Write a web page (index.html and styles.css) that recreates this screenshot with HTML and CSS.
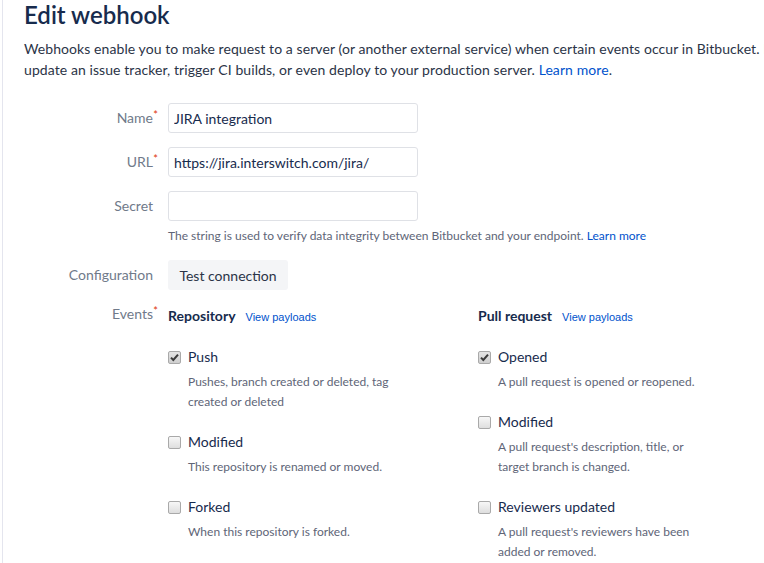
FILE: index.html
```html
<!DOCTYPE html>
<html lang="en">
<head>
<meta charset="utf-8">
<title>Edit webhook</title>
<link rel="stylesheet" href="styles.css">
</head>
<body>
<div class="page">
  <h1 class="title">Edit webhook</h1>
  <p class="intro">Webhooks enable you to make request to a server (or another external service) when certain events occur in Bitbucket. For example, you can use webhooks to<br>update an issue tracker, trigger CI builds, or even deploy to your production server. <a class="link" href="#">Learn more</a>.</p>

  <form class="form">
    <div class="row">
      <label class="lbl"><span class="req">Name</span></label>
      <div class="field"><input class="text" type="text" value="JIRA integration"></div>
    </div>
    <div class="row">
      <label class="lbl"><span class="req">URL</span></label>
      <div class="field"><input class="text" type="text" value="https://jira.interswitch.com/jira/"></div>
    </div>
    <div class="row">
      <label class="lbl">Secret</label>
      <div class="field">
        <input class="text" type="text" value="">
        <div class="help">The string is used to verify data integrity between Bitbucket and your endpoint. <a class="link" href="#">Learn more</a></div>
      </div>
    </div>
    <div class="row">
      <label class="lbl">Configuration</label>
      <div class="field"><button class="btn" type="button">Test connection</button></div>
    </div>
    <div class="row row-events">
      <label class="lbl lbl-events"><span class="req">Events</span></label>
      <div class="events">
        <div class="group">
          <div class="group-head"><span class="group-title">Repository</span><a class="payloads" href="#">View payloads</a></div>
          <div class="event">
            <div class="event-head"><span class="cb checked"><svg viewBox="0 0 13 13" width="13" height="13"><path d="M3 6.6 L5.3 9 L10 3.6" fill="none" stroke="#3a3a3a" stroke-width="2"/></svg></span><span>Push</span></div>
            <div class="event-desc">Pushes, branch created or deleted, tag<br>created or deleted</div>
          </div>
          <div class="event">
            <div class="event-head"><span class="cb"></span><span>Modified</span></div>
            <div class="event-desc">This repository is renamed or moved.</div>
          </div>
          <div class="event">
            <div class="event-head"><span class="cb"></span><span>Forked</span></div>
            <div class="event-desc">When this repository is forked.</div>
          </div>
        </div>
        <div class="group">
          <div class="group-head"><span class="group-title">Pull request</span><a class="payloads" href="#">View payloads</a></div>
          <div class="event">
            <div class="event-head"><span class="cb checked"><svg viewBox="0 0 13 13" width="13" height="13"><path d="M3 6.6 L5.3 9 L10 3.6" fill="none" stroke="#3a3a3a" stroke-width="2"/></svg></span><span>Opened</span></div>
            <div class="event-desc">A pull request is opened or reopened.</div>
          </div>
          <div class="event">
            <div class="event-head"><span class="cb"></span><span>Modified</span></div>
            <div class="event-desc">A pull request's description, title, or<br>target branch is changed.</div>
          </div>
          <div class="event">
            <div class="event-head"><span class="cb"></span><span>Reviewers updated</span></div>
            <div class="event-desc">A pull request's reviewers have been<br>added or removed.</div>
          </div>
        </div>
      </div>
    </div>
  </form>
</div>
</body>
</html>
```
FILE: styles.css
```css
html, body {
  margin: 0;
  padding: 0;
  overflow: hidden;
  background: #ffffff;
}

body {
  font-family: "Segoe UI", Lato, "Liberation Sans", sans-serif;
  font-size: 14px;
  color: #172b4d;
}

.page {
  margin-left: 2px;
  border-left: 1px solid #e4e5ee;
  padding-left: 21px;
  min-height: 600px;
}

.title {
  margin: 0;
  font-size: 24px;
  line-height: 30px;
  font-weight: 600;
  color: #172b4d;
}

.intro {
  margin: 8px 0 0 0;
  line-height: 21px;
  white-space: nowrap;
  letter-spacing: 0.08px;
  color: #2b3447;
}

.link {
  color: #0052cc;
  text-decoration: none;
}

.form {
  margin-top: 23px;
}

.row {
  display: grid;
  grid-template-columns: 129px 1fr;
  column-gap: 15px;
  margin-bottom: 14px;
  align-items: start;
}

.lbl {
  text-align: right;
  line-height: 30px;
  color: #707a8a;
  white-space: nowrap;
}

.req {
  position: relative;
}

.req::after {
  content: "*";
  position: absolute;
  right: -5px;
  top: 0;
  font-size: 11px;
  line-height: 1;
  color: #de350b;
}

.text {
  box-sizing: border-box;
  width: 250px;
  height: 30px;
  margin: 0;
  padding: 0 5px;
  border: 1px solid #dfe1e6;
  border-radius: 3px;
  font: inherit;
  font-size: 14px;
  color: #172b4d;
  background: #ffffff;
  display: block;
}

.help {
  margin-top: 5px;
  font-size: 12px;
  line-height: 20px;
  color: #5e6577;
  white-space: nowrap;
}

.btn {
  box-sizing: border-box;
  width: 120px;
  height: 30px;
  border: none;
  border-radius: 3px;
  background: #f4f5f7;
  color: #2b3447;
  font: inherit;
  font-size: 14px;
  padding: 0;
}

.lbl-events {
  line-height: 20px;
}

.events {
  display: grid;
  grid-template-columns: 310px 310px;
}

.group-head {
  display: flex;
  align-items: baseline;
  gap: 10px;
  line-height: 24px;
  margin-bottom: 18px;
}

.group-title {
  font-weight: 700;
  color: #172b4d;
}

.payloads {
  font-family: "Liberation Sans", Arial, sans-serif;
  font-size: 11px;
  color: #0052cc;
  text-decoration: none;
}

.event {
  margin-bottom: 20px;
}

.event-head {
  display: flex;
  align-items: center;
  gap: 7px;
  line-height: 20px;
  color: #172b4d;
}

.cb {
  box-sizing: border-box;
  width: 13px;
  height: 13px;
  border: 1px solid #a9a9a9;
  border-radius: 2px;
  background: linear-gradient(#f7f7f7, #dedede);
  display: inline-flex;
  align-items: center;
  justify-content: center;
  flex: none;
}

.cb svg {
  display: block;
  margin: -1px;
}

.cb.checked {
  background: linear-gradient(#e4e4e4, #cfcfcf);
}

.event-desc {
  margin: 5px 0 0 20px;
  font-size: 12px;
  line-height: 20px;
  color: #5e6577;
  white-space: nowrap;
}
```
